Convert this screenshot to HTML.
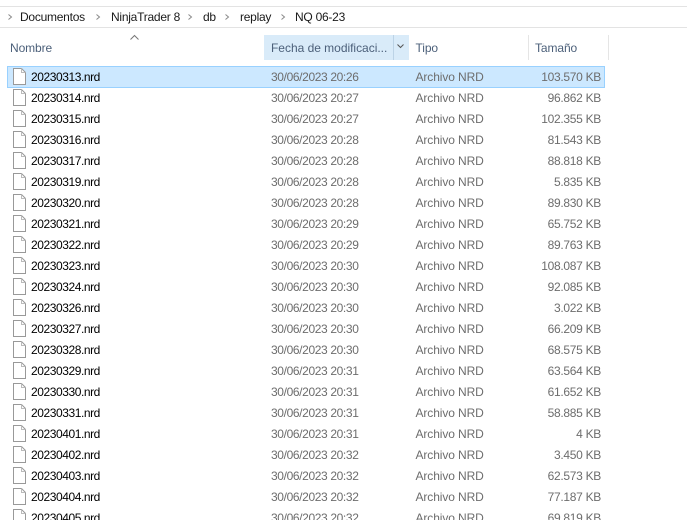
<!DOCTYPE html>
<html><head><meta charset="utf-8"><style>
html,body{margin:0;padding:0;background:#fff}
#p{position:relative;width:687px;height:520px;overflow:hidden;background:#fff;font-family:"Liberation Sans",sans-serif;font-size:12px}
#p div,#p span,#p svg{position:absolute}
.l{height:1px;background:#e3e3e3;left:0;width:687px}
.b{top:10px;line-height:14px;color:#1a1a1a;white-space:nowrap;letter-spacing:-.25px}
.h{top:41px;line-height:14px;color:#4c607a;white-space:nowrap;letter-spacing:-.1px}
.s{top:35px;width:1px;height:25px;background:#e5e5e5}
#c{left:0;top:0;width:687px;height:520px;overflow:hidden}
.r{left:0;width:687px;height:21px}
.r svg{left:13px;top:2px}
.n{left:31px;top:4px;line-height:15px;color:#000;letter-spacing:-.43px}
.d{left:271px;top:4px;line-height:15px;color:#6d6d6d;letter-spacing:-.37px;white-space:nowrap}
.t{left:415.5px;top:4px;line-height:15px;color:#6d6d6d;letter-spacing:-.1px;white-space:nowrap}
.z{right:86px;top:4px;line-height:15px;color:#6d6d6d;letter-spacing:-.3px;white-space:nowrap}
</style></head><body><div id="p">
<div class="l" style="top:6px"></div><div class="l" style="top:27px"></div>
<svg style="left:0;top:0" width="687" height="60" fill="none" stroke="#8a8a8a" stroke-width="1"><path d="M8.5 14.5l3 2.5-3 2.5M96.5 14.5l3 2.5-3 2.5M188.5 14.5l3 2.5-3 2.5M225.5 14.5l3 2.5-3 2.5M281.5 14.5l3 2.5-3 2.5"/></svg>
<span class="b" style="left:20px">Documentos</span>
<span class="b" style="left:111px">NinjaTrader 8</span>
<span class="b" style="left:203px">db</span>
<span class="b" style="left:240px">replay</span>
<span class="b" style="left:295px">NQ 06-23</span>
<div style="left:264px;top:35px;width:145px;height:25px;background:#d9ebf9"></div>
<div style="left:393px;top:35px;width:1px;height:25px;background:#bcd3e6"></div>
<div class="s" style="left:528px"></div><div class="s" style="left:608px"></div>
<svg style="left:125px;top:30px" width="20" height="14" fill="none" stroke="#777" stroke-width="1"><path d="M5.5 9.5l4-4 4 4"/></svg>
<svg style="left:395px;top:42px" width="14" height="10" fill="none" stroke="#555" stroke-width="1"><path d="M2.5 2.5l3 3 3-3"/></svg>
<span class="h" style="left:10px">Nombre</span>
<span class="h" style="left:271px;letter-spacing:-.02px">Fecha de modificaci...</span>
<span class="h" style="left:415.5px">Tipo</span>
<span class="h" style="left:535px">Tamaño</span>
<div style="left:7px;top:66px;width:596px;height:20px;background:#cce8ff;border:1px solid #99d1ff"></div>
<div id="c">
<div class="r" style="top:66px"><svg width="14" height="18"><path d="M.5 .5h8l4 4v12H.5z" fill="#fff" stroke="#999"/><path d="M8.5 .5v4h4" fill="none" stroke="#bbb"/></svg><span class="n">20230313.nrd</span><span class="d">30/06/2023 20:26</span><span class="t">Archivo NRD</span><span class="z">103.570 KB</span></div>
<div class="r" style="top:87px"><svg width="14" height="18"><path d="M.5 .5h8l4 4v12H.5z" fill="#fff" stroke="#999"/><path d="M8.5 .5v4h4" fill="none" stroke="#bbb"/></svg><span class="n">20230314.nrd</span><span class="d">30/06/2023 20:27</span><span class="t">Archivo NRD</span><span class="z">96.862 KB</span></div>
<div class="r" style="top:108px"><svg width="14" height="18"><path d="M.5 .5h8l4 4v12H.5z" fill="#fff" stroke="#999"/><path d="M8.5 .5v4h4" fill="none" stroke="#bbb"/></svg><span class="n">20230315.nrd</span><span class="d">30/06/2023 20:27</span><span class="t">Archivo NRD</span><span class="z">102.355 KB</span></div>
<div class="r" style="top:129px"><svg width="14" height="18"><path d="M.5 .5h8l4 4v12H.5z" fill="#fff" stroke="#999"/><path d="M8.5 .5v4h4" fill="none" stroke="#bbb"/></svg><span class="n">20230316.nrd</span><span class="d">30/06/2023 20:28</span><span class="t">Archivo NRD</span><span class="z">81.543 KB</span></div>
<div class="r" style="top:150px"><svg width="14" height="18"><path d="M.5 .5h8l4 4v12H.5z" fill="#fff" stroke="#999"/><path d="M8.5 .5v4h4" fill="none" stroke="#bbb"/></svg><span class="n">20230317.nrd</span><span class="d">30/06/2023 20:28</span><span class="t">Archivo NRD</span><span class="z">88.818 KB</span></div>
<div class="r" style="top:171px"><svg width="14" height="18"><path d="M.5 .5h8l4 4v12H.5z" fill="#fff" stroke="#999"/><path d="M8.5 .5v4h4" fill="none" stroke="#bbb"/></svg><span class="n">20230319.nrd</span><span class="d">30/06/2023 20:28</span><span class="t">Archivo NRD</span><span class="z">5.835 KB</span></div>
<div class="r" style="top:192px"><svg width="14" height="18"><path d="M.5 .5h8l4 4v12H.5z" fill="#fff" stroke="#999"/><path d="M8.5 .5v4h4" fill="none" stroke="#bbb"/></svg><span class="n">20230320.nrd</span><span class="d">30/06/2023 20:28</span><span class="t">Archivo NRD</span><span class="z">89.830 KB</span></div>
<div class="r" style="top:213px"><svg width="14" height="18"><path d="M.5 .5h8l4 4v12H.5z" fill="#fff" stroke="#999"/><path d="M8.5 .5v4h4" fill="none" stroke="#bbb"/></svg><span class="n">20230321.nrd</span><span class="d">30/06/2023 20:29</span><span class="t">Archivo NRD</span><span class="z">65.752 KB</span></div>
<div class="r" style="top:234px"><svg width="14" height="18"><path d="M.5 .5h8l4 4v12H.5z" fill="#fff" stroke="#999"/><path d="M8.5 .5v4h4" fill="none" stroke="#bbb"/></svg><span class="n">20230322.nrd</span><span class="d">30/06/2023 20:29</span><span class="t">Archivo NRD</span><span class="z">89.763 KB</span></div>
<div class="r" style="top:255px"><svg width="14" height="18"><path d="M.5 .5h8l4 4v12H.5z" fill="#fff" stroke="#999"/><path d="M8.5 .5v4h4" fill="none" stroke="#bbb"/></svg><span class="n">20230323.nrd</span><span class="d">30/06/2023 20:30</span><span class="t">Archivo NRD</span><span class="z">108.087 KB</span></div>
<div class="r" style="top:276px"><svg width="14" height="18"><path d="M.5 .5h8l4 4v12H.5z" fill="#fff" stroke="#999"/><path d="M8.5 .5v4h4" fill="none" stroke="#bbb"/></svg><span class="n">20230324.nrd</span><span class="d">30/06/2023 20:30</span><span class="t">Archivo NRD</span><span class="z">92.085 KB</span></div>
<div class="r" style="top:297px"><svg width="14" height="18"><path d="M.5 .5h8l4 4v12H.5z" fill="#fff" stroke="#999"/><path d="M8.5 .5v4h4" fill="none" stroke="#bbb"/></svg><span class="n">20230326.nrd</span><span class="d">30/06/2023 20:30</span><span class="t">Archivo NRD</span><span class="z">3.022 KB</span></div>
<div class="r" style="top:318px"><svg width="14" height="18"><path d="M.5 .5h8l4 4v12H.5z" fill="#fff" stroke="#999"/><path d="M8.5 .5v4h4" fill="none" stroke="#bbb"/></svg><span class="n">20230327.nrd</span><span class="d">30/06/2023 20:30</span><span class="t">Archivo NRD</span><span class="z">66.209 KB</span></div>
<div class="r" style="top:339px"><svg width="14" height="18"><path d="M.5 .5h8l4 4v12H.5z" fill="#fff" stroke="#999"/><path d="M8.5 .5v4h4" fill="none" stroke="#bbb"/></svg><span class="n">20230328.nrd</span><span class="d">30/06/2023 20:30</span><span class="t">Archivo NRD</span><span class="z">68.575 KB</span></div>
<div class="r" style="top:360px"><svg width="14" height="18"><path d="M.5 .5h8l4 4v12H.5z" fill="#fff" stroke="#999"/><path d="M8.5 .5v4h4" fill="none" stroke="#bbb"/></svg><span class="n">20230329.nrd</span><span class="d">30/06/2023 20:31</span><span class="t">Archivo NRD</span><span class="z">63.564 KB</span></div>
<div class="r" style="top:381px"><svg width="14" height="18"><path d="M.5 .5h8l4 4v12H.5z" fill="#fff" stroke="#999"/><path d="M8.5 .5v4h4" fill="none" stroke="#bbb"/></svg><span class="n">20230330.nrd</span><span class="d">30/06/2023 20:31</span><span class="t">Archivo NRD</span><span class="z">61.652 KB</span></div>
<div class="r" style="top:402px"><svg width="14" height="18"><path d="M.5 .5h8l4 4v12H.5z" fill="#fff" stroke="#999"/><path d="M8.5 .5v4h4" fill="none" stroke="#bbb"/></svg><span class="n">20230331.nrd</span><span class="d">30/06/2023 20:31</span><span class="t">Archivo NRD</span><span class="z">58.885 KB</span></div>
<div class="r" style="top:423px"><svg width="14" height="18"><path d="M.5 .5h8l4 4v12H.5z" fill="#fff" stroke="#999"/><path d="M8.5 .5v4h4" fill="none" stroke="#bbb"/></svg><span class="n">20230401.nrd</span><span class="d">30/06/2023 20:31</span><span class="t">Archivo NRD</span><span class="z">4 KB</span></div>
<div class="r" style="top:444px"><svg width="14" height="18"><path d="M.5 .5h8l4 4v12H.5z" fill="#fff" stroke="#999"/><path d="M8.5 .5v4h4" fill="none" stroke="#bbb"/></svg><span class="n">20230402.nrd</span><span class="d">30/06/2023 20:32</span><span class="t">Archivo NRD</span><span class="z">3.450 KB</span></div>
<div class="r" style="top:465px"><svg width="14" height="18"><path d="M.5 .5h8l4 4v12H.5z" fill="#fff" stroke="#999"/><path d="M8.5 .5v4h4" fill="none" stroke="#bbb"/></svg><span class="n">20230403.nrd</span><span class="d">30/06/2023 20:32</span><span class="t">Archivo NRD</span><span class="z">62.573 KB</span></div>
<div class="r" style="top:486px"><svg width="14" height="18"><path d="M.5 .5h8l4 4v12H.5z" fill="#fff" stroke="#999"/><path d="M8.5 .5v4h4" fill="none" stroke="#bbb"/></svg><span class="n">20230404.nrd</span><span class="d">30/06/2023 20:32</span><span class="t">Archivo NRD</span><span class="z">77.187 KB</span></div>
<div class="r" style="top:507px"><svg width="14" height="18"><path d="M.5 .5h8l4 4v12H.5z" fill="#fff" stroke="#999"/><path d="M8.5 .5v4h4" fill="none" stroke="#bbb"/></svg><span class="n">20230405.nrd</span><span class="d">30/06/2023 20:32</span><span class="t">Archivo NRD</span><span class="z">69.819 KB</span></div>
</div>
</div></body></html>
